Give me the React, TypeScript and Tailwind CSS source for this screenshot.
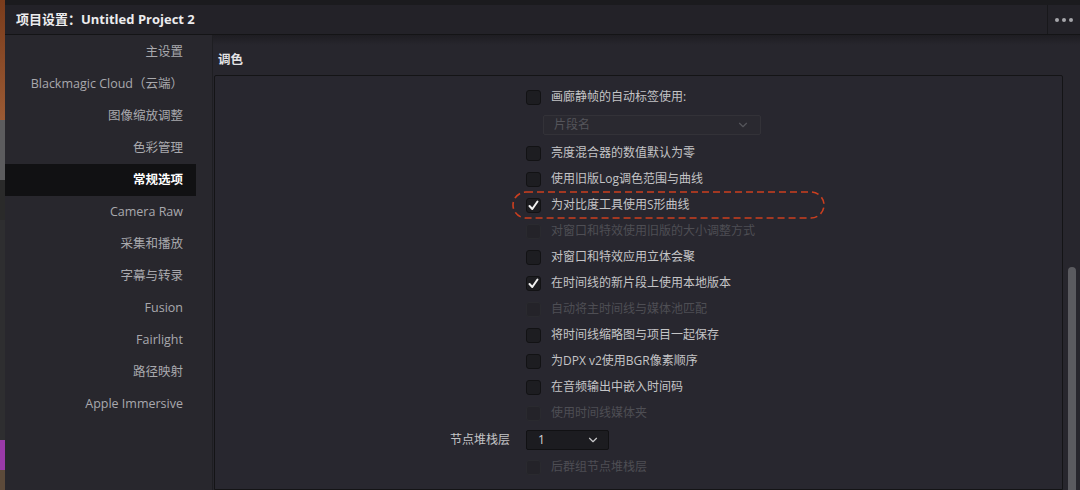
import { ChevronDown } from "lucide-react";

const NAV = [
  "主设置",
  "Blackmagic Cloud（云端）",
  "图像缩放调整",
  "色彩管理",
  "常规选项",
  "Camera Raw",
  "采集和播放",
  "字幕与转录",
  "Fusion",
  "Fairlight",
  "路径映射",
  "Apple Immersive",
];

type Row = { label: string; checked?: boolean; disabled?: boolean; highlight?: boolean };

const ROWS_TOP: Row[] = [
  { label: "亮度混合器的数值默认为零" },
  { label: "使用旧版Log调色范围与曲线" },
  { label: "为对比度工具使用S形曲线", checked: true, highlight: true },
  { label: "对窗口和特效使用旧版的大小调整方式", disabled: true },
  { label: "对窗口和特效应用立体会聚" },
  { label: "在时间线的新片段上使用本地版本", checked: true },
  { label: "自动将主时间线与媒体池匹配", disabled: true },
  { label: "将时间线缩略图与项目一起保存" },
  { label: "为DPX v2使用BGR像素顺序" },
  { label: "在音频输出中嵌入时间码" },
  { label: "使用时间线媒体夹", disabled: true },
];

function Check({ checked, disabled }: { checked?: boolean; disabled?: boolean }) {
  return (
    <div
      className={
        "w-[15px] h-[15px] rounded-[3px] border flex items-center justify-center shrink-0 " +
        (disabled ? "bg-[#242329] border-[#2a2a2f]" : "bg-[#1d1d21] border-[#121214]")
      }
    >
      {checked && (
        <svg width="11" height="11" viewBox="0 0 11 11">
          <path d="M1.5 6 L4.3 9 L9.5 1.5" fill="none" stroke="#f2f2f2" strokeWidth="2" strokeLinecap="round" strokeLinejoin="round" />
        </svg>
      )}
    </div>
  );
}

function CheckRow({ row }: { row: Row }) {
  return (
    <div className="relative h-[26px] flex items-center gap-[10px]">
      {row.highlight && (
        <svg className="absolute left-[-14px] top-[-1px]" width="313" height="28" viewBox="0 0 313 28">
          <rect x="1" y="1" width="311" height="26" rx="13" fill="none" stroke="#cc3f1f" strokeWidth="1.6" strokeDasharray="7 4" />
        </svg>
      )}
      <Check checked={row.checked} disabled={row.disabled} />
      <span className={row.disabled ? "text-[#4e4e54]" : "text-[#c4c4c6]"}>{row.label}</span>
    </div>
  );
}

export default function App() {
  return (
    <div
      className="w-[1080px] h-[490px] overflow-hidden flex bg-[#1b1b1e] text-[12px]"
      style={{ fontFamily: '"Open Sans", "Noto Sans CJK SC", sans-serif' }}
    >
      {/* bit of the app behind the dialog */}
      <div className="w-[5px] h-full flex flex-col">
        <div className="h-[120px] bg-gradient-to-b from-[#7a3c1c] to-[#9a5a34]" />
        <div className="h-[60px] bg-[#5c5c5e]" />
        <div className="h-[40px] bg-[#2a2a2a]" />
        <div className="h-[220px] bg-[#2e2e30]" />
        <div className="h-[30px] bg-[#9a3aa8]" />
        <div className="flex-1 bg-[#5c4a3a]" />
      </div>

      <div className="flex-1 flex flex-col pt-[5px]">
        {/* title bar */}
        <div className="h-[30px] flex items-center bg-[#232228] border-b border-[#141416]">
          <div className="flex-1 pl-[11px] text-[13px] font-bold text-[#ececee]">
            项目设置：Untitled Project 2
          </div>
          <div className="w-[33px] h-full border-l border-[#18181b] flex items-center justify-center gap-[3px]">
            <span className="w-[4px] h-[4px] rounded-full bg-[#a6a6aa]" />
            <span className="w-[4px] h-[4px] rounded-full bg-[#a6a6aa]" />
            <span className="w-[4px] h-[4px] rounded-full bg-[#a6a6aa]" />
          </div>
        </div>

        <div className="flex-1 flex min-h-0">
          {/* sidebar */}
          <div className="w-[208px] bg-[#28272d] border-r border-[#1e1e22] flex flex-col pt-[1px]">
            {NAV.map((n) => (
              <div
                key={n}
                className={
                  "h-[32px] flex items-center justify-end pr-[13px] mr-[16px] text-[12.5px] " +
                  (n === "常规选项" ? "bg-[#111113] text-white font-bold" : "text-[#a9a9ad]")
                }
              >
                {n}
              </div>
            ))}
          </div>

          {/* content */}
          <div className="flex-1 flex flex-col bg-[#27262d] min-w-0">
            <div className="h-[10px] bg-gradient-to-b from-[#1e1d22] to-[#27262d]" />
            <div className="flex-1 flex min-h-0">
              <div className="flex-1 flex flex-col pl-[1px] min-w-0">
                <div className="h-[30px] flex items-center pl-[4px] text-[12.5px] font-bold text-[#e4e4e6]">调色</div>
                <div className="flex-1 border border-[#141416] rounded-t-[2px] bg-[#28272f] pl-[311px] pt-[8px]">
                  <div className="flex flex-col">
                    <CheckRow row={{ label: "画廊静帧的自动标签使用:" }} />
                    <div className="h-[30px] flex items-center pl-[17px]">
                      <div className="w-[218px] h-[20px] rounded-[2px] border border-[#333238] bg-[#2a2930] flex items-center justify-between px-[10px] text-[#55555b]">
                        <span>片段名</span>
                        <ChevronDown size={14} strokeWidth={2} color="#55555b" />
                      </div>
                    </div>
                    {ROWS_TOP.map((r) => (
                      <CheckRow key={r.label} row={r} />
                    ))}
                    <div className="relative h-[28px] flex items-center">
                      <span className="absolute right-[calc(100%+16px)] whitespace-nowrap text-[#c4c4c6]">节点堆栈层</span>
                      <div className="w-[83px] h-[20px] rounded-[2px] border border-[#111113] bg-[#1c1c20] flex items-center justify-between pl-[11px] pr-[8px] text-[#d4d4d6]">
                        <span>1</span>
                        <ChevronDown size={14} strokeWidth={2} color="#c8c8ca" />
                      </div>
                    </div>
                    <CheckRow row={{ label: "后群组节点堆栈层", disabled: true }} />
                  </div>
                </div>
              </div>
              {/* scrollbar */}
              <div className="w-[17px] flex flex-col items-center pt-[222px]">
                <div className="w-[8px] flex-1 rounded-t-[4px] bg-[#5b5b60]" />
              </div>
            </div>
          </div>
        </div>
      </div>
    </div>
  );
}
